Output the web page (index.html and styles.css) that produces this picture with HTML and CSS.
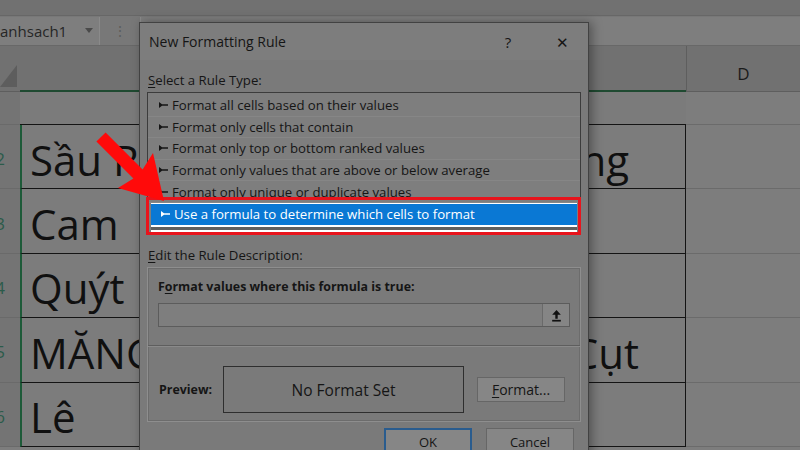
FILE: index.html
```html
<!DOCTYPE html>
<html lang="vi">
  <head>
    <meta charset="UTF-8" />
    <meta name="viewport" content="width=device-width, initial-scale=1.0" />
    <title>New Formatting Rule</title>
    <link rel="stylesheet" href="styles.css">
  </head>
  <body>
    <div class="excel">
      <div class="topstrip"></div>
      <div class="formula-row">
        <div class="namebox"><span>anhsach1</span><span class="caret"></span></div>
        <div class="dots">⋮</div>
        <div class="fx"></div>
      </div>

      <div class="sheet">
        <div class="cell corner"><span class="corner-tri"></span></div>
        <div class="cell colhead sel"></div>
        <div class="cell colhead sel"></div>
        <div class="cell colhead col-d">D</div>

        <div class="cell rowhead"></div>
        <div class="cell row1"></div>
        <div class="cell row1"></div>
        <div class="cell grid-d"></div>

        <div class="cell rowhead">2</div>
        <div class="cell b">Sầu Riêng</div>
        <div class="cell c c-narrow">Sầu Riêng</div>
        <div class="cell grid-d"></div>

        <div class="cell rowhead">3</div>
        <div class="cell b">Cam</div>
        <div class="cell c"></div>
        <div class="cell grid-d"></div>

        <div class="cell rowhead">4</div>
        <div class="cell b">Quýt</div>
        <div class="cell c"></div>
        <div class="cell grid-d"></div>

        <div class="cell rowhead">5</div>
        <div class="cell b">MĂNG CỤT</div>
        <div class="cell c">Măng Cụt</div>
        <div class="cell grid-d"></div>

        <div class="cell rowhead">6</div>
        <div class="cell b">Lê</div>
        <div class="cell c"></div>
        <div class="cell grid-d"></div>
      </div>
    </div>

    <div class="dialog">
      <div class="dlg-title">
        <span class="dlg-name">New Formatting Rule</span>
        <span class="dlg-help">?</span>
        <span class="dlg-close">✕</span>
      </div>

      <div class="dlg-body">
        <div class="label"><u>S</u>elect a Rule Type:</div>
        <div class="rule-list">
          <div class="rule"><svg class="pip" viewBox="0 0 9 6"><path d="M0 0L3 2.2H9V3.8H3L0 6Z" /></svg>Format all cells based on their values</div>
          <div class="rule"><svg class="pip" viewBox="0 0 9 6"><path d="M0 0L3 2.2H9V3.8H3L0 6Z" /></svg>Format only cells that contain</div>
          <div class="rule"><svg class="pip" viewBox="0 0 9 6"><path d="M0 0L3 2.2H9V3.8H3L0 6Z" /></svg>Format only top or bottom ranked values</div>
          <div class="rule"><svg class="pip" viewBox="0 0 9 6"><path d="M0 0L3 2.2H9V3.8H3L0 6Z" /></svg>Format only values that are above or below average</div>
          <div class="rule"><svg class="pip" viewBox="0 0 9 6"><path d="M0 0L3 2.2H9V3.8H3L0 6Z" /></svg>Format only unique or duplicate values</div>
          <div class="rule selected"><svg class="pip" viewBox="0 0 9 6"><path d="M0 0L3 2.2H9V3.8H3L0 6Z" /></svg>Use a formula to determine which cells to format</div>
          <div class="list-tail"></div>
        </div>

        <div class="label label-edit"><u>E</u>dit the Rule Description:</div>
        <div class="group">
          <div class="group-top">
            <div class="label-bold">F<u>o</u>rmat values where this formula is true:</div>
            <div class="formula-input">
              <div class="formula-field"></div>
              <div class="collapse-btn">
                <svg viewBox="0 0 12 12"><path d="M6 1L2 5.2H4.9V9H7.1V5.2H10Z" /><rect x="2" y="10" width="8" height="1.6" /></svg>
              </div>
            </div>
          </div>
          <div class="group-bottom">
            <span class="label-bold preview-label">Preview:</span>
            <div class="preview">No Format Set</div>
            <div class="btn btn-format"><u>F</u>ormat...</div>
          </div>
        </div>
      </div>

      <div class="dlg-buttons">
        <div class="btn btn-ok">OK</div>
        <div class="btn btn-cancel">Cancel</div>
      </div>
    </div>

    <div class="highlight"></div>
    <svg class="arrow" viewBox="0 0 800 450">
      <polygon points="105.6,132.4 142.6,169.4 153,153 164,201 118,188 133.4,178.6 96.4,141.6" />
    </svg>
  </body>
</html>
```

FILE: styles.css
```css
* {
  margin: 0;
  padding: 0;
  box-sizing: border-box;
}
body {
  width: 800px;
  height: 450px;
  overflow: hidden;
  position: relative;
  background: #7d7d7d;
  font-family: "Open Sans", "Noto Sans", sans-serif;
  color: #151515;
}

/* excel behind the dialog */
.topstrip {
  height: 16px;
  background: #717171;
  border-bottom: 1px solid #676767;
}
.formula-row {
  height: 30px;
  display: flex;
  align-items: center;
  background: #787878;
  border-bottom: 1px solid #686868;
}
.namebox {
  width: 100px;
  height: 28px;
  display: flex;
  align-items: center;
  justify-content: space-between;
  padding-right: 6px;
  background: #7e7e7e;
  border-right: 1px solid #8a8a8a;
  font-size: 15px;
  color: #262626;
}
.caret {
  width: 0;
  height: 0;
  border-left: 4px solid transparent;
  border-right: 4px solid transparent;
  border-top: 5px solid #4a4a4a;
}
.dots {
  width: 40px;
  text-align: center;
  color: #5c5c5c;
  font-size: 14px;
}
.fx {
  flex: 1;
  height: 28px;
  background: #7e7e7e;
  border-left: 1px solid #8a8a8a;
}
.sheet {
  display: grid;
  grid-template-columns: 20px 424px 242px 114px;
  grid-template-rows: 46px 33px repeat(5, 64.4px);
}
.cell {
  display: flex;
  align-items: center;
  overflow: hidden;
  white-space: nowrap;
}
.corner {
  background: #717171;
  border-bottom: 1px solid #5e5e5e;
  align-items: flex-end;
  padding: 0 3px 4px 0;
}
.corner-tri {
  width: 0;
  height: 0;
  border-left: 17px solid transparent;
  border-bottom: 22px solid #5d5d5d;
}
.colhead {
  background: #717171;
  border-bottom: 1px solid #5e5e5e;
}
.colhead.sel {
  border-bottom: 2px solid #1f4a31;
}
.col-d {
  justify-content: center;
  font-size: 17px;
  color: #1b1b1b;
  border-left: 1px solid #5e5e5e;
  padding-top: 10px;
}
.rowhead {
  justify-content: flex-end;
  padding: 4px 15px 0 0;
  background: #747474;
  border-bottom: 1px solid #6a6a6a;
  font-size: 17px;
  color: #2b5b4a;
}
.row1 {
  background: #7b7b7b;
  border-bottom: 1px solid #141414;
}
.b,
.c {
  background: #7c7c7c;
  border-bottom: 1px solid #141414;
  font-size: 42px;
  color: #101010;
  padding-top: 5px;
}
.b {
  border-left: 2px solid #1d5a38;
  padding-left: 8px;
}
.c {
  justify-content: flex-end;
  border-right: 1px solid #141414;
  padding-right: 46px;
}
.c-narrow {
  padding-right: 56px;
}
.grid-d {
  background: #7d7d7d;
  border-bottom: 1px solid #6b6b6b;
}

/* dialog */
.dialog {
  position: absolute;
  left: 139px;
  top: 22px;
  width: 450px;
  height: 440px;
  background: #7a7a7a;
  border: 1px solid #424242;
  box-shadow: 3px 0 10px rgba(0, 0, 0, 0.35);
  font-size: 13.2px;
}
.dlg-title {
  height: 37px;
  display: flex;
  align-items: center;
  padding-left: 9px;
  background: #7d7d7d;
  font-size: 14px;
}
.dlg-name {
  flex: 1;
}
.dlg-help {
  width: 20px;
  text-align: center;
  font-size: 15px;
  margin-right: 34px;
}
.dlg-close {
  width: 20px;
  text-align: center;
  font-size: 15px;
  margin-right: 16px;
}
.dlg-body {
  padding: 0 7px;
}
.label {
  height: 16px;
  line-height: 16px;
  margin-top: 12px;
  padding-left: 1px;
}
.label u,
.label-bold u,
.btn u {
  text-decoration-thickness: 1px;
  text-underline-offset: 2px;
}
.rule-list {
  margin-top: 4px;
  height: 141px;
  background: #7e7e7e;
  border: 1px solid #3c3c3c;
  padding-top: 2px;
  overflow: hidden;
}
.rule {
  height: 21.6px;
  line-height: 18px;
  display: flex;
  align-items: center;
  padding-left: 11px;
  border-bottom: 1px solid #868686;
  white-space: nowrap;
}
.pip {
  width: 9px;
  height: 6px;
  margin-right: 4px;
  fill: #151515;
}
.rule.selected {
  height: 22px;
  background: #0a78d4;
  color: #ffffff;
  border-top: 1px solid #ffffff;
  border-bottom: none;
  padding-left: 10px;
  margin: 0 3px;
}
.rule.selected .pip {
  fill: #ffffff;
}
.list-tail {
  height: 7px;
  margin: 0 3px;
  background: #5f5f5f;
  border-top: 2px solid #ffffff;
  border-bottom: 2px solid #ffffff;
}
.label-edit {
  margin-top: 14px;
}
.group {
  margin-top: 4px;
  height: 155px;
  border: 1px solid #8e8e8e;
  box-shadow: inset 0 0 0 1px #6c6c6c;
}
.group-top {
  height: 78px;
  padding: 11px 10px 0;
  border-bottom: 1px solid #5e5e5e;
}
.label-bold {
  font-weight: 700;
  font-size: 12.4px;
  line-height: 16px;
}
.formula-input {
  margin-top: 8px;
  height: 24px;
  display: flex;
  border: 1px solid #5c5c5c;
  background: #7e7e7e;
}
.formula-field {
  flex: 1;
}
.collapse-btn {
  width: 27px;
  display: flex;
  align-items: center;
  justify-content: center;
  background: #858585;
  border-left: 1px solid #6a6a6a;
}
.collapse-btn svg {
  width: 13px;
  height: 13px;
  fill: #111111;
}
.group-bottom {
  height: 74px;
  display: flex;
  align-items: center;
  padding: 12px 0 0 11px;
  border-top: 1px solid #8a8a8a;
}
.preview-label {
  width: 64px;
}
.preview {
  width: 241px;
  height: 47px;
  display: flex;
  align-items: center;
  justify-content: center;
  border: 1px solid #2e2e2e;
  font-size: 15.5px;
}
.btn {
  display: flex;
  align-items: center;
  justify-content: center;
  background: #868686;
  border: 1px solid #666666;
}
.btn-format {
  width: 88px;
  height: 25px;
  margin-left: 13px;
  font-size: 14px;
}
.dlg-buttons {
  display: flex;
  justify-content: flex-end;
  gap: 14px;
  padding-right: 14px;
  margin-top: 6px;
}
.btn-ok,
.btn-cancel {
  width: 88px;
  height: 27px;
  font-size: 13px;
}
.btn-ok {
  border: 2px solid #2a5c8e;
}

/* annotations on top */
.highlight {
  position: absolute;
  left: 146px;
  top: 197px;
  width: 435px;
  height: 38px;
  border: 3.5px solid #e8141c;
}
.arrow {
  position: absolute;
  left: 0;
  top: 0;
  width: 800px;
  height: 450px;
  fill: #ff0a0a;
}
```
